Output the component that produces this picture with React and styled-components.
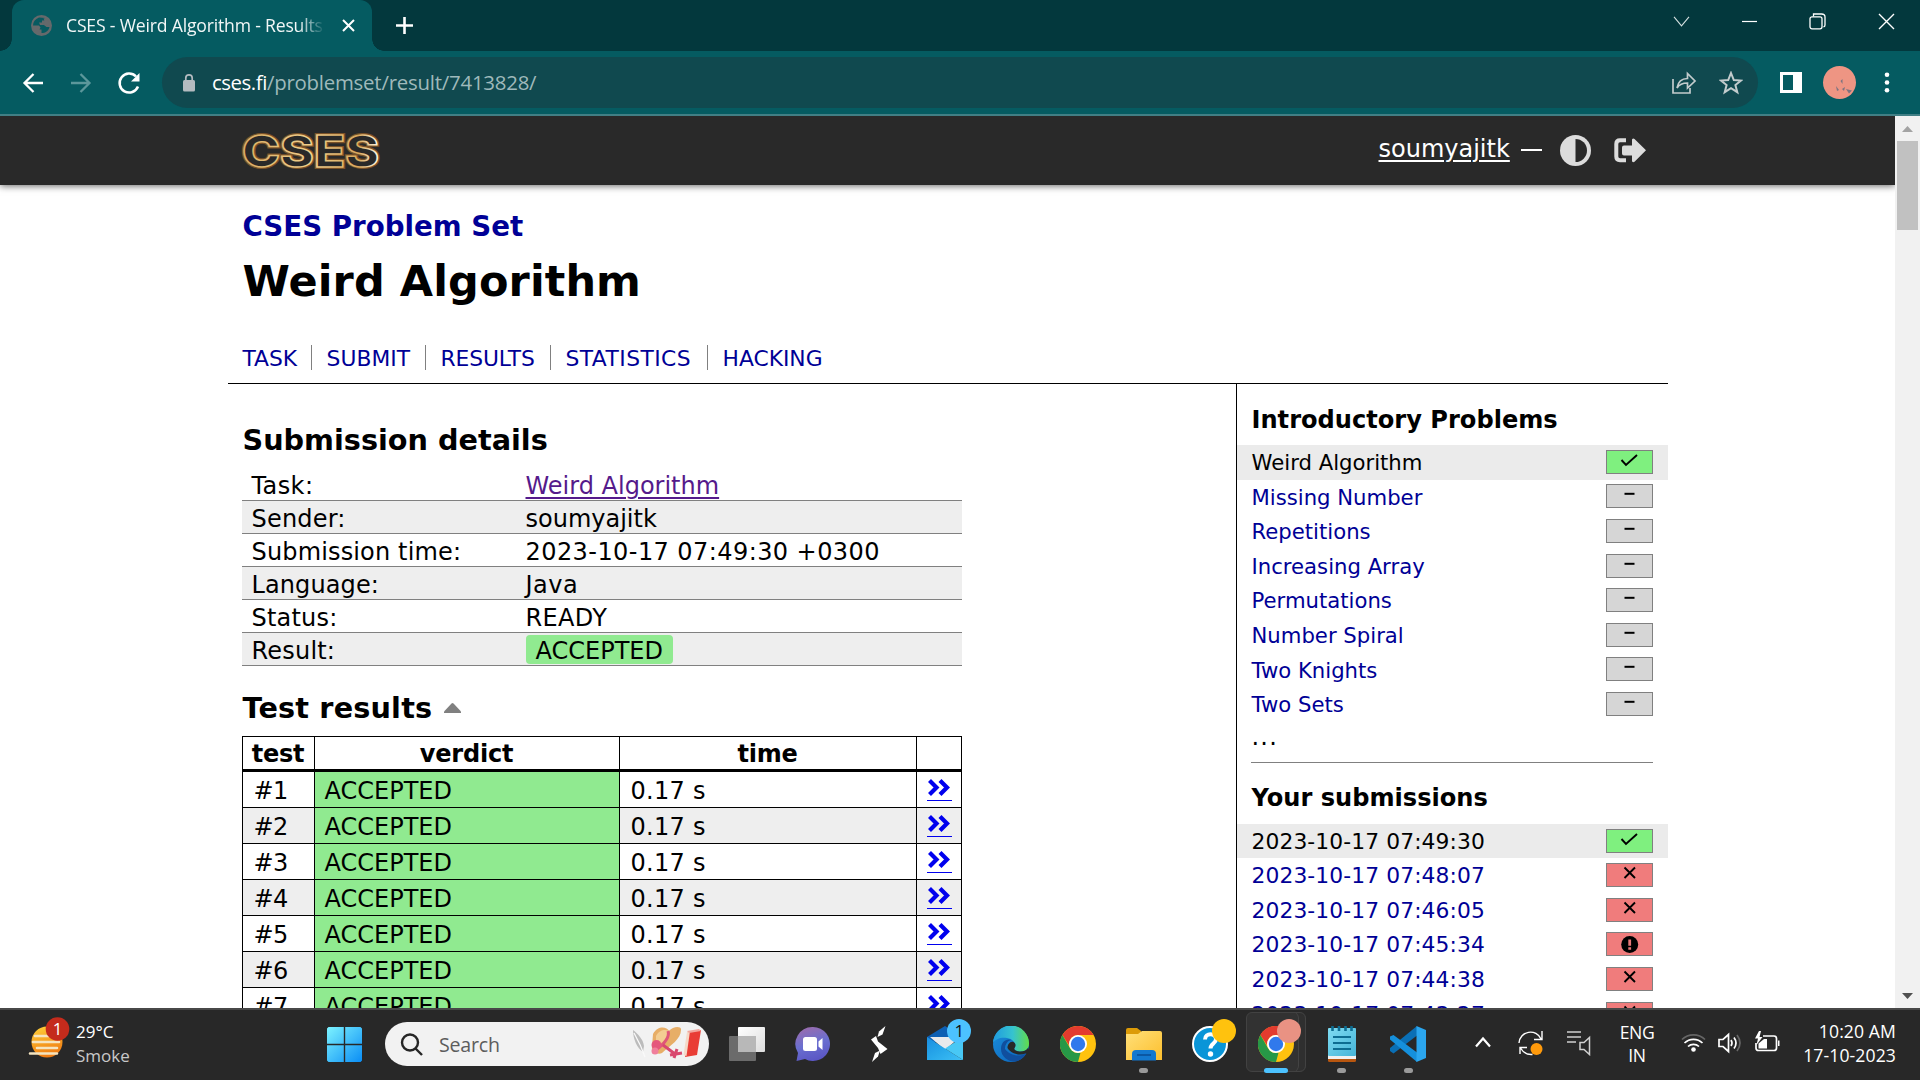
import React from 'react';
import styled, { createGlobalStyle } from 'styled-components';

const Global = createGlobalStyle`
  * { box-sizing: border-box; }
  body { margin: 0; background: #fff; overflow: hidden; }
  svg { display: block; flex: none; }
`;

const ui = '"Open Sans", "Noto Sans", sans-serif';
const page = '"DejaVu Sans", Verdana, sans-serif';

const Screen = styled.div`
  width: 1920px;
  height: 1080px;
  display: flex;
  flex-direction: column;
  overflow: hidden;
  font-family: ${page};
  color: #000;
`;
const Text = styled.span`
  letter-spacing: ${(p) => p.$ls || 0}px;
`;

/* ---------- browser chrome ---------- */
const TabStrip = styled.div`
  height: 51px;
  flex: none;
  display: flex;
  align-items: center;
  padding-left: 12px;
  background: #03383d;
`;
const Tab = styled.div`
  position: relative;
  width: 360px;
  height: 51px;
  display: flex;
  align-items: center;
  padding-left: 19px;
  background: #055b61;
  border-radius: 12px 12px 0 0;
  &::before, &::after {
    content: '';
    position: absolute;
    bottom: 0;
    width: 12px;
    height: 12px;
  }
  &::before { left: -12px; background: radial-gradient(circle at 0 0, transparent 11.5px, #055b61 12px); }
  &::after { right: -12px; background: radial-gradient(circle at 100% 0, transparent 11.5px, #055b61 12px); }
`;
const TabTitle = styled.div`
  width: 258px;
  margin: -1px 18px 0 14px;
  overflow: hidden;
  white-space: nowrap;
  font: 17.6px/26px ${ui};
  letter-spacing: -0.18px;
  color: #f2f7f7;
  mask-image: linear-gradient(90deg, #000 232px, transparent 259px);
`;
const NewTab = styled.div`
  margin-left: 23px;
  flex: 1;
`;
const WindowButtons = styled.div`
  display: flex;
  align-items: center;
  height: 43px;
  align-self: flex-start;
  gap: 50px;
  padding-right: 25px;
`;
const Toolbar = styled.div`
  height: 65px;
  flex: none;
  display: flex;
  align-items: center;
  padding: 0 21px 0 21px;
  background: #055b61;
  border-bottom: 2px solid #417f85;
`;
const NavButtons = styled.div`
  display: flex;
  gap: 24px;
  width: 141px;
`;
const AddressBar = styled.div`
  width: 1596px;
  height: 51px;
  display: flex;
  align-items: center;
  padding: 0 15px 0 20px;
  border-radius: 26px;
  background: #10494f;
`;
const Url = styled.div`
  flex: 1;
  margin: -2px 0 0 16px;
  font: 20.4px/30px ${ui};
  letter-spacing: -0.22px;
  color: #9fb9bb;
  b { font-weight: 400; color: #fff; letter-spacing: -0.45px; }
`;
const AddressActions = styled.div`
  display: flex;
  gap: 22px;
`;
const Extensions = styled.div`
  display: flex;
  align-items: center;
  margin-left: 21px;
`;
const Avatar = styled.div`
  width: 33px;
  height: 33px;
  margin: 0 28px 0 21px;
  border-radius: 50%;
  background: #ee9583;
`;

/* ---------- page ---------- */
const Viewport = styled.div`
  height: 892px;
  flex: none;
  display: flex;
  background: #fff;
  overflow: hidden;
`;
const Page = styled.div`
  width: 1895px;
  height: 892px;
  overflow: hidden;
`;
const Header = styled.header`
  height: 69px;
  display: flex;
  justify-content: center;
  background: #292929;
  box-shadow: 0 1px 7px rgba(0, 0, 0, 0.6);
`;
const HeaderInner = styled.div`
  width: 1440px;
  display: flex;
  align-items: center;
  justify-content: space-between;
  padding: 0 22px 0 14px;
`;
const Controls = styled.div`
  display: flex;
  align-items: center;
  font-size: 24px;
  line-height: 30px;
  color: #fff;
`;
const UserLink = styled.a`
  width: 132px;
  margin-top: -4px;
  text-decoration: underline;
  text-decoration-thickness: 2px;
  text-underline-offset: 3px;
`;
const Dash = styled.span`
  width: 21px;
  height: 2px;
  margin: -2px 18px 0 10px;
  background: #fff;
`;
const Content = styled.div`
  width: 1440px;
  margin: 0 auto;
`;
const TitleBlock = styled.div`
  height: 199px;
  padding: 24px 14px 0 15px;
  border-bottom: 1px solid #000;
`;
const SetName = styled.h3`
  margin: 0;
  font-size: 27.7px;
  line-height: 36px;
  color: #000096;
`;
const Title = styled.h1`
  margin: 10px 0 38px;
  font-size: 43px;
  letter-spacing: 0.1px;
  line-height: 52px;
`;
const Nav = styled.ul`
  display: flex;
  margin: 0;
  padding: 0;
  list-style: none;
`;
const NavItem = styled.li`
  height: 25px;
  width: ${(p) => p.$w}px;
  line-height: 27px;
  font-size: 21.8px;
  letter-spacing: ${(p) => p.$ls}px;
  white-space: nowrap;
  color: #000096;
  border-right: ${(p) => (p.$last ? 0 : 1)}px solid #808080;
  & + & { padding-left: 15px; }
`;
const Columns = styled.div`
  display: flex;
`;
const Main = styled.main`
  width: 1008px;
  padding: 38px 0 0 14px;
`;
const Heading = styled.h2`
  display: flex;
  align-items: center;
  gap: 12px;
  margin: ${(p) => p.$mt || 0}px 0 0;
  padding-left: 1px;
  font-size: 28.7px;
  line-height: 36px;
  letter-spacing: ${(p) => p.$ls || 0}px;
`;
const Details = styled.div`
  width: 720px;
  margin-top: 10px;
  font-size: 24px;
`;
const DetailRow = styled.div`
  height: 33px;
  display: grid;
  grid-template-columns: 274px 1fr;
  grid-template-rows: 32px;
  padding-left: 10px;
  line-height: 37px;
  white-space: nowrap;
  border-bottom: 1px solid #808080;
  background: ${(p) => (p.$odd ? '#eee' : '#fff')};
`;
const VisitedLink = styled.a`
  color: #551a8b;
  text-decoration: underline;
  text-decoration-thickness: 2px;
  text-underline-offset: 3px;
`;
const Accepted = styled.div`
  width: 147px;
  height: 29px;
  margin-top: 2px;
  padding-left: 10px;
  line-height: 33px;
  border-radius: 4px;
  background: #90ea90;
`;
const Table = styled.div`
  width: 720px;
  margin-top: 10px;
  border: solid #000;
  border-width: 1px 0 0 1px;
  font-size: 24px;
`;
const TableRow = styled.div`
  height: ${(p) => (p.$head ? 35 : 36)}px;
  display: grid;
  grid-template-columns: 72px 305px 297px 45px;
  grid-template-rows: ${(p) => (p.$head ? 32 : 35)}px;
  border-bottom: ${(p) => (p.$head ? 3 : 1)}px solid #000;
  background: ${(p) => (p.$odd ? '#eee' : '#fff')};
`;
const Th = styled.div`
  border-right: 1px solid #000;
  text-align: center;
  font-weight: 700;
  line-height: 34px;
  letter-spacing: -0.2px;
`;
const Td = styled.div`
  border-right: 1px solid #000;
  padding-left: ${(p) => p.$pad || 10}px;
  line-height: 38px;
  background: ${(p) => (p.$ok ? '#90ea90' : 'transparent')};
`;
const MoreLink = styled.a`
  display: block;
  width: 25px;
  height: 29px;
  padding-top: 6px;
  border-bottom: 1px solid #0000ee;
`;
const Sidebar = styled.aside`
  width: 432px;
  height: 640px;
  padding-top: 21px;
  border-left: 1px solid #000;
`;
const SideTitle = styled.h4`
  margin: 0 0 ${(p) => p.$mb || 10}px 15px;
  font-size: 24.1px;
  line-height: 30px;
`;
const SideRow = styled.div`
  height: 34.6px;
  display: flex;
  justify-content: space-between;
  padding: 0 15px 0 15px;
  font-size: ${(p) => (p.$date ? 21.8 : 21.2)}px;
  letter-spacing: ${(p) => (p.$date ? 0.1 : 0)}px;
  line-height: ${(p) => (p.$date ? 36.6 : 35.8)}px;
  color: ${(p) => (p.$current ? '#000' : '#000096')};
  background: ${(p) => (p.$current ? '#ebebeb' : 'transparent')};
`;
const tones = { ok: '#7ff07f', none: '#d6d6d6', bad: '#f07c7c' };
const Badge = styled.div`
  width: 47px;
  height: 24px;
  margin-top: ${(p) => p.$mt}px;
  border: 1px solid #808080;
  background: ${(p) => tones[p.$tone]};
`;
const Ellipsis = styled.div`
  height: 31px;
  padding-left: 15px;
  line-height: 31px;
  font-size: 24px;
  letter-spacing: 1.2px;
`;
const Rule = styled.div`
  height: 1px;
  margin: 9px 15px 20px 14px;
  background: #808080;
`;
const Scrollbar = styled.div`
  width: 25px;
  height: 892px;
  display: flex;
  flex-direction: column;
  align-items: center;
  background: #f1f1f1;
`;
const Thumb = styled.div`
  width: 21px;
  height: 89px;
  margin-bottom: auto;
  background: #c1c1c1;
`;

/* ---------- taskbar ---------- */
const Taskbar = styled.div`
  height: 72px;
  flex: none;
  display: flex;
  align-items: stretch;
  border-top: 2px solid #484848;
  background: #282828;
  font-family: ${ui};
  color: #fff;
`;
const Weather = styled.div`
  width: 313px;
  display: flex;
  padding: 12px 0 0 28px;
`;
const WeatherIcon = styled.div`
  margin-top: -5px;
`;
const WeatherText = styled.div`
  margin: -2px 0 0 6px;
  font-size: 17px;
  line-height: 24px;
  div + div { color: #c8c8c8; }
`;
const StartButton = styled.div`
  width: 73px;
  padding: 17px 0 0 15px;
`;
const SearchBox = styled.div`
  width: 325px;
  height: 44px;
  margin-top: 12px;
  display: flex;
  align-items: center;
  padding: 0 6px 0 15px;
  border-radius: 22px;
  background: #f2f2f2;
  color: #5d5d5d;
  font-size: 19.6px;
`;
const SearchLabel = styled.div`
  flex: 1;
  margin-left: 16px;
  letter-spacing: -0.2px;
`;
const Apps = styled.div`
  display: flex;
  margin-left: 5px;
  width: 727px;
`;
const AppButton = styled.div`
  position: relative;
  width: 66.1px;
  height: 70px;
  display: flex;
  flex-direction: column;
  align-items: center;
  padding-top: 16px;
`;
const ActiveFrame = styled.div`
  position: absolute;
  left: 3px;
  top: 2px;
  width: 60px;
  height: 60px;
  border: 1px solid #424242;
  border-radius: 6px;
  background: #323232;
  box-shadow: inset -7px 0 0 -1px #2f2f2f, inset -8px 0 0 -1px #434343;
`;
const Icon = styled.div`
  position: relative;
  width: 36px;
  height: 36px;
`;
const Notice = styled.div`
  position: absolute;
  left: ${(p) => p.$x}px;
  top: -7px;
  width: 24px;
  height: 24px;
  border-radius: 50%;
  background: ${(p) => p.$bg};
  color: #111;
  font-size: 17px;
  line-height: 24px;
  text-align: center;
`;
const Indicator = styled.div`
  position: relative;
  width: ${(p) => (p.$active ? 24 : 9)}px;
  height: 5px;
  margin-top: 6px;
  border-radius: 3px;
  background: ${(p) => (p.$active ? '#4cc2ff' : '#9a9a9a')};
`;
const Tray = styled.div`
  flex: 1;
  display: flex;
  padding: 18px 24px 0 34px;
`;
const Slot = styled.div`
  width: ${(p) => p.$w}px;
`;
const Lines = styled.div`
  width: ${(p) => p.$w}px;
  margin-top: ${(p) => p.$mt}px;
  font-size: 17.6px;
  line-height: ${(p) => p.$lh}px;
  text-align: ${(p) => p.$align};
  letter-spacing: ${(p) => p.$ls}px;
  white-space: nowrap;
`;

const Stroke = ({ w, h, d, c = '#fff', s = 1.5, f = 'none', children, ...r }) => (
  <svg width={w} height={h} viewBox={`0 0 ${w} ${h}`} fill={f} stroke={c} strokeWidth={s} {...r}>
    {d && <path d={d} />}
    {children}
  </svg>
);

const Globe = () => (
  <svg width="21" height="21" viewBox="0 0 21 21">
    <circle cx="10.5" cy="10.5" r="10.5" fill="#65696b" />
    <path d="M8 2.500C4 4 2 7 2 10.500h6l1.500 2-1 2h2v3.500c4 0 7-2 8-6h-3l-2.500-2h-4l-1-2.500h3V5.500h3V3z" fill="#075a60" />
    <path d="M12.500 2.500l5 3.500 1.500 4-3 1.500-3.500-2 1-3z" fill="#65696b" />
  </svg>
);

const Logo = () => (
  <svg width="138" height="40" viewBox="0 0 138 40" overflow="visible">
    <defs>
      <linearGradient id="gold" x1="0" x2="1">
        <stop offset="0" stopColor="#d9ad62" />
        <stop offset=".5" stopColor="#f0cf8c" />
        <stop offset=".85" stopColor="#d9a95c" />
        <stop offset="1" stopColor="#fff6e6" />
      </linearGradient>
    </defs>
    {[['#7a5228', 4], ['url(#gold)', 1.5]].map(([c, w]) => (
      <text key={w} x="0" y="36" fontFamily="Inter, sans-serif" fontWeight="800" fontSize="44" textLength="137"
        lengthAdjust="spacingAndGlyphs" fill="#292929" stroke={c} strokeWidth={w}>CSES</text>
    ))}
  </svg>
);

const Mark = ({ kind }) => (
  <svg width="45" height="22" viewBox="0 0 45 22" fill="none" stroke="#000" strokeWidth="1.9">
    {kind === 'ok' && <path d="M14.500 9l4.500 5L30 4" />}
    {kind === 'none' && <path d="M17.500 8.800h10" strokeWidth="2" />}
    {kind === 'x' && <path d="M17.500 3.500l10.500 10.500M28 3.500L17.500 14" />}
    {kind === '!' && (
      <>
        <circle cx="22.700" cy="11.500" r="8.500" fill="#000" stroke="none" />
        <path d="M22.700 6.500v6.200M22.700 14.200v2.600" stroke="#e87878" strokeWidth="2.800" />
      </>
    )}
  </svg>
);

const Chrome = () => (
  <svg width="36" height="36" viewBox="0 0 36 36">
    <circle cx="18" cy="18" r="18" fill="#ffc20e" />
    <path d="M2.400 9A18 18 0 0 1 33.600 9H18a9 9 0 0 0-7.800 4.500l-1 6z" fill="#e33b2e" />
    <path d="M2.400 9l7.800 13.500A9 9 0 0 0 20.500 26.700L18 36A18 18 0 0 1 2.400 9z" fill="#279847" />
    <circle cx="18" cy="18" r="9" fill="#fff" />
    <circle cx="18" cy="18" r="7.200" fill="#3079ec" />
  </svg>
);

const icons = {
  taskview: (
    <svg width="36" height="36" viewBox="0 0 36 36">
      <defs><linearGradient id="tv" x2="1" y2="1"><stop stopColor="#fff" /><stop offset="1" stopColor="#ddd" /></linearGradient></defs>
      <rect x="9" y="1" width="27" height="25" rx="1" fill="url(#tv)" />
      <rect x="0" y="10" width="27" height="25" rx="1" fill="#6b6b6b" />
      <path d="M9 10h18v16H9z" fill="#b8b8b8" />
    </svg>
  ),
  chat: (
    <svg width="36" height="36" viewBox="0 0 36 36">
      <defs><linearGradient id="ch" x1=".3" x2=".6" y2="1"><stop stopColor="#9a6cae" /><stop offset=".5" stopColor="#6a6fd0" /><stop offset="1" stopColor="#5a55c4" /></linearGradient></defs>
      <path d="M18 1a17 17 0 1 1-8 32l-8.500 2 1.500-8A17 17 0 0 1 18 1z" fill="url(#ch)" />
      <rect x="8" y="11" width="14" height="14" rx="2.500" fill="#fff" />
      <path d="M23.500 15.500l4-3.500v12l-4-3.500z" fill="#fff" />
    </svg>
  ),
  bolt: (
    <svg width="36" height="36" viewBox="0 0 36 36" fill="#fff">
      <path d="M24.500 0l-6.500 5.500-1.500 5.500 5-2.500z" />
      <path d="M10 13.500l5-3.500 2 5.500 9.500 7.500-7 5-2.500-6z" />
      <path d="M11 36l6-5.500 2-6-5 2.500z" />
    </svg>
  ),
  mail: (
    <svg width="36" height="36" viewBox="0 0 36 36">
      <defs><linearGradient id="ml" x2="1" y2="1"><stop stopColor="#1a8de0" /><stop offset=".5" stopColor="#28a8ea" /><stop offset="1" stopColor="#3fc0f5" /></linearGradient></defs>
      <path d="M0 11L18 0l18 11v5H0z" fill="#0d5fb3" />
      <path d="M3 11h30L18 24z" fill="#e9eaec" />
      <path d="M0 11l36 23H0z" fill="url(#ml)" />
      <path d="M36 11L18 22.500 36 34z" fill="#48c8f5" />
    </svg>
  ),
  edge: (
    <svg width="36" height="36" viewBox="0 0 36 36">
      <defs>
        <linearGradient id="e1" x2="1"><stop stopColor="#1f9be0" /><stop offset=".55" stopColor="#36c3cf" /><stop offset="1" stopColor="#62dc4a" /></linearGradient>
        <linearGradient id="e2" x1="0" x2="1" y2="1"><stop stopColor="#1b8fdc" /><stop offset="1" stopColor="#0b62b8" /></linearGradient>
      </defs>
      <circle cx="18" cy="18" r="18" fill="url(#e2)" />
      <path d="M12 23c0-5 3-9 7-9-6-2-11 2-11 9 0 8 8 13 14 12.500 5-.6 9-4 11-8-7 4-16 2-21-4.500z" fill="#104f9e" />
      <path d="M0 17A18 18 0 0 1 36 18c0 5-4 7.500-8.500 7.500-4 0-7-1.500-6-3.500C24 19 21 13 14 12 8 11 2 13 0 17z" fill="url(#e1)" />
      <path d="M21.500 22c-1.200 2 2 3.500 6 3.500 3 0 6-1 7.500-3.500l1 6-3.500-.5c-6 2.500-15 0-18-5.500 0-4 3-7.500 6-6 2.500 1.500 2.500 4 1 6z" fill="#282828" />
    </svg>
  ),
  chrome: <Chrome />,
  folder: (
    <svg width="36" height="36" viewBox="0 0 36 36">
      <defs><linearGradient id="fo" x2="1" y2="1"><stop stopColor="#ffe07a" /><stop offset="1" stopColor="#fdbf2d" /></linearGradient></defs>
      <path d="M0 4q0-2 2-2h9l4 3v5H0z" fill="#dc9b08" />
      <path d="M0 8h12l4-3h18q2 0 2 2v27H0z" fill="url(#fo)" />
      <path d="M6 34.500V28q0-4 4-4h16q4 0 4 4v6.500z" fill="#1378cf" />
      <path d="M11 29h14" stroke="#0a4d94" strokeWidth="1.500" />
    </svg>
  ),
  help: (
    <svg width="36" height="36" viewBox="0 0 36 36">
      <circle cx="18" cy="18" r="17" fill="#0995d8" stroke="#fff" strokeWidth="2" />
      <path d="M13 13.500c0-7 11-7 11-.5 0 4.500-5.500 4.500-5.500 9.500" fill="none" stroke="#fff" strokeWidth="4" />
      <circle cx="18.500" cy="28" r="2.700" fill="#fff" />
    </svg>
  ),
  notepad: (
    <svg width="36" height="36" viewBox="0 0 36 36">
      <defs><linearGradient id="np" x2="1" y2="1"><stop stopColor="#7fdcf2" /><stop offset="1" stopColor="#45b4d8" /></linearGradient></defs>
      <rect x="4" y="30" width="28" height="6" rx="1.500" fill="#b8560f" />
      <rect x="4" y="28" width="28" height="5" fill="#f0f0f0" />
      <rect x="4" y="2" width="28" height="28" rx="1" fill="url(#np)" />
      <path d="M9 11h18M9 17h18M9 23h18" stroke="#0d6d92" strokeWidth="1.800" />
      <path d="M8.500 0v5M15 0v5M21.500 0v5M27.500 0v5" stroke="#0d6d92" strokeWidth="2.600" />
    </svg>
  ),
  code: (
    <svg width="36" height="36" viewBox="0 0 36 36">
      <path d="M27 0L0 22v3l3.500 2.500L27 9.500z" fill="#0a6fb5" />
      <path d="M0 13.500v-3L3.500 9 27 26.500V36z" fill="#1590dc" />
      <path d="M26.500 0L36 4v28l-9.500 4z" fill="#2ba6ee" />
    </svg>
  ),
};

const apps = [
  { icon: 'taskview' },
  { icon: 'chat' },
  { icon: 'bolt' },
  { icon: 'mail', notice: '#4cc2ff', x: 20, count: '1' },
  { icon: 'edge' },
  { icon: 'chrome' },
  { icon: 'folder', open: true },
  { icon: 'help', notice: '#ffc20e', x: 20 },
  { icon: 'chrome', notice: '#e99283', x: 19, active: true, open: true },
  { icon: 'notepad', open: true },
  { icon: 'code', open: true },
];

const nav = [
  ['TASK', 69, 0], ['SUBMIT', 114, 0.05], ['RESULTS', 125, -0.1], ['STATISTICS', 157, 0.45], ['HACKING', 120, 0],
];
const details = [
  ['Task:', <VisitedLink>Weird Algorithm</VisitedLink>, 0.4],
  ['Sender:', 'soumyajitk', 0.2],
  ['Submission time:', <Text $ls={0.43}>2023-10-17 07:49:30 +0300</Text>, 0.15],
  ['Language:', <Text $ls={0.5}>Java</Text>, 0.1],
  ['Status:', <Text $ls={0.3}>READY</Text>, 0.2],
  ['Result:', <Accepted>ACCEPTED</Accepted>, 0.2],
];
const problems = ['Weird Algorithm', 'Missing Number', 'Repetitions', 'Increasing Array', 'Permutations', 'Number Spiral', 'Two Knights', 'Two Sets'];
const submissions = [
  ['07:49:30', 'ok'], ['07:48:07', 'x'], ['07:46:05', 'x'], ['07:45:34', '!'], ['07:44:38', 'x'], ['07:43:27', 'x'],
];

export default function App() {
  return (
    <Screen>
      <Global />
      <TabStrip>
        <Tab>
          <Globe />
          <TabTitle>CSES - Weird Algorithm - Results</TabTitle>
          <Stroke w={13} h={13} s={2} d="M1 1l11 11M12 1L1 12" />
        </Tab>
        <NewTab><Stroke w={19} h={19} s={2.6} d="M9.500 1v17M1 9.500h17" /></NewTab>
        <WindowButtons>
          <Stroke w={17} h={11} s={1.1} c="#d5e0e0" d="M1 .8l7.500 9L16 .8" />
          <Stroke w={19} h={16} s={1.2} d="M2 7.500h15" />
          <Stroke w={17} h={17} s={1.3} d="M4.500 3.500V1h8q3.500 0 3.500 3v8q0 1.500-1.500 2">
            <rect x="1" y="3.800" width="12" height="12" rx="2" />
          </Stroke>
          <Stroke w={19} h={17} s={1.4} d="M3 1l15 15M18 1L3 16" />
        </WindowButtons>
      </TabStrip>
      <Toolbar>
        <NavButtons>
          <Stroke w={24} h={24} s={2.3} d="M22 12H4M12.500 3L3.500 12l9 9" />
          <Stroke w={24} h={24} s={2.3} c="#5c979b" d="M2 12h18M11.500 3l9 9-9 9" />
          <Stroke w={24} h={24} s={2.5} d="M21 15.500A9.500 9.500 0 1 1 19 5.500">
            <path d="M22.500 2v8.500H14z" fill="#fff" stroke="none" />
          </Stroke>
        </NavButtons>
        <AddressBar>
          <svg width="14" height="20" viewBox="0 0 14 20">
            <rect x="1" y="7" width="12" height="11.500" rx="1.500" fill="#b4bbc0" />
            <path d="M3.800 8V5a3.200 3.200 0 0 1 6.400 0V8" fill="none" stroke="#b4bbc0" strokeWidth="1.700" />
          </svg>
          <Url><b>cses.fi</b>/problemset/result/7413828/</Url>
          <AddressActions>
            <Stroke w={26} h={24} s={1.7} c="#c3cccd" d="M2 8v14h17v-5M6 17c1-6 4-9.500 10.500-9.500V2.500L24 10l-7.500 7v-5C12 12 8.500 13 6 17z" />
            <Stroke w={24} h={24} s={2} c="#c3cccd" d="M12 2l2.800 7 7.200.5-5.600 4.600 1.900 7.100L12 17.200l-6.300 4 1.900-7.100L2 9.500l7.200-.5z" />
          </AddressActions>
        </AddressBar>
        <Extensions>
          <svg width="23" height="21" viewBox="0 0 23 21">
            <path fillRule="evenodd" fill="#fff" d="M1 0h22v21H1zM4 3v15h10V3z" />
          </svg>
          <Avatar>
            <svg width="33" height="33" viewBox="0 0 33 33" fill="#7d7480">
              <path d="M17.500 15l2-2v5zM13 20l3 4-2 1zM19 23l3-2-1 4zM23 23l6 1.500-3 3z" />
            </svg>
          </Avatar>
          <svg width="6" height="21" viewBox="0 0 6 21" fill="#fff">
            <circle cx="3" cy="2.800" r="2.300" /><circle cx="3" cy="10.500" r="2.300" /><circle cx="3" cy="18.200" r="2.300" />
          </svg>
        </Extensions>
      </Toolbar>

      <Viewport>
        <Page>
          <Header>
            <HeaderInner>
              <Logo />
              <Controls>
                <UserLink>soumyajitk</UserLink>
                <Dash />
                <svg width="31" height="31" viewBox="0 0 31 31">
                  <circle cx="15.500" cy="15.500" r="15.500" fill="#dcdcdc" />
                  <path d="M15.500 4a11.500 11.500 0 0 1 0 23z" fill="#292929" />
                </svg>
                <svg width="55" height="25" viewBox="-23 0 55 25">
                  <path d="M12 2.300H6q-3.700 0-3.700 3.700v12.500q0 3.700 3.700 3.700h6" fill="none" stroke="#dcdcdc" strokeWidth="4" />
                  <path d="M10 7.500h8V1.500q1-1.500 2.500-.5L32 12.300 20.500 23.800q-1.500 1-2.500-.5V17.500h-8q-2 0-2-2v-6q0-2 2-2z" fill="#dcdcdc" />
                </svg>
              </Controls>
            </HeaderInner>
          </Header>
          <Content>
            <TitleBlock>
              <SetName>CSES Problem Set</SetName>
              <Title>Weird Algorithm</Title>
              <Nav>
                {nav.map(([t, w, ls], i) => <NavItem key={t} $w={w} $ls={ls} $last={i === 4}>{t}</NavItem>)}
              </Nav>
            </TitleBlock>
            <Columns>
              <Main>
                <Heading>Submission details</Heading>
                <Details>
                  {details.map(([k, v, ls], i) => (
                    <DetailRow key={k} $odd={i % 2 === 1}><Text $ls={ls}>{k}</Text><div>{v}</div></DetailRow>
                  ))}
                </Details>
                <Heading $mt={24} $ls={0.17}>
                  Test results
                  <svg width="17" height="10" viewBox="0 0 17 10"><path d="M0 8.500L7.500.5q1-1 2 0L17 8.500V10H0z" fill="#808080" /></svg>
                </Heading>
                <Table>
                  <TableRow $head><Th>test</Th><Th>verdict</Th><Th>time</Th><Th /></TableRow>
                  {[1, 2, 3, 4, 5, 6, 7].map((n) => (
                    <TableRow key={n} $odd={n % 2 === 0}>
                      <Td $pad={11}><Text $ls={-0.5}>#{n}</Text></Td>
                      <Td $ok>ACCEPTED</Td>
                      <Td $pad={11}><Text $ls={0.3}>0.17 s</Text></Td>
                      <Td>
                        <MoreLink>
                          <Stroke w={25} h={20} s={4.2} c="#0000ee" d="M2.500 2.500l7 7-7 7M13 2.500l7 7-7 7" />
                        </MoreLink>
                      </Td>
                    </TableRow>
                  ))}
                </Table>
              </Main>
              <Sidebar>
                <SideTitle>Introductory Problems</SideTitle>
                {problems.map((p, i) => (
                  <SideRow key={p} $current={i === 0}>
                    <span>{p}</span>
                    <Badge $mt={4.8} $tone={i ? 'none' : 'ok'}><Mark kind={i ? 'none' : 'ok'} /></Badge>
                  </SideRow>
                ))}
                <Ellipsis>...</Ellipsis>
                <Rule />
                <SideTitle $mb={10.8}>Your submissions</SideTitle>
                {submissions.map(([t, k], i) => (
                  <SideRow key={t} $date $current={i === 0}>
                    <span>2023-10-17 {t}</span>
                    <Badge $mt={5} $tone={i ? 'bad' : 'ok'}><Mark kind={k} /></Badge>
                  </SideRow>
                ))}
              </Sidebar>
            </Columns>
          </Content>
        </Page>
        <Scrollbar>
          <svg width="25" height="25" viewBox="0 0 25 25"><path d="M7 16l5.500-6L18 16z" fill="#a3a3a3" /></svg>
          <Thumb />
          <svg width="25" height="25" viewBox="0 0 25 25"><path d="M7 10l5.500 6L18 10z" fill="#505050" /></svg>
        </Scrollbar>
      </Viewport>

      <Taskbar>
        <Weather>
          <WeatherIcon>
            <svg width="42" height="50" viewBox="0 0 42 50">
              <defs><linearGradient id="sun" y2="1" x2=".3"><stop stopColor="#ffd23a" /><stop offset="1" stopColor="#f07c12" /></linearGradient></defs>
              <circle cx="19" cy="25" r="15.500" fill="url(#sun)" />
              <path d="M7 19h14M5 25h26M9 31h20M2 36.500h27" stroke="#f5e4bf" strokeWidth="2.600" strokeLinecap="round" />
              <circle cx="29.500" cy="12" r="11.800" fill="#c42b1c" />
              <text x="29.500" y="18" fontSize="17" fill="#fff" textAnchor="middle">1</text>
            </svg>
          </WeatherIcon>
          <WeatherText><div>29°C</div><div>Smoke</div></WeatherText>
        </Weather>
        <StartButton>
          <svg width="35" height="35" viewBox="0 0 35 35">
            <defs><linearGradient id="win" x2="1" y2="1"><stop stopColor="#7df3ff" /><stop offset="1" stopColor="#0a8df5" /></linearGradient></defs>
            <path d="M1.500 0H16.800V16.800H0V1.500zM18.200 0H33.500L35 1.500V16.800H18.200zM0 18.200H16.800V35H1.500L0 33.500zM18.200 18.200H35V33.500L33.500 35H18.200z" fill="url(#win)" />
          </svg>
        </StartButton>
        <SearchBox>
          <Stroke w={23} h={23} c="#262626" s={2.4} d="M15.500 15.500l6.500 6.500"><circle cx="10" cy="9.500" r="8" /></Stroke>
          <SearchLabel>Search</SearchLabel>
          <svg width="72" height="34" viewBox="0 0 72 34">
            <path d="M2 3c5 4 10 9 11 16l-1 6C6 21 2 12 2 3z" fill="#bcbcbc" />
            <path d="M3 6c4 7 7 12 11 24" stroke="#fafafa" strokeWidth="1.300" fill="none" />
            <path d="M22 7C27-2 36 0 38 4c4-5 13-5 12-1 0 9-10 15-19 23-4 2-11-1-10-6z" fill="#e7ae67" />
            <path d="M25 9c3-6 9-7 13-5-1 6-6 12-13 15z" fill="#f3cd92" />
            <path d="M37 4c2 6-4 13-12 19" stroke="#e05579" strokeWidth="3" fill="none" />
            <circle cx="25.500" cy="18" r="5" fill="#e5577d" /><circle cx="24" cy="24" r="3.500" fill="#f07f9c" />
            <path d="M32 18l12 9M46 22l-3 9M39 28l12-2" stroke="#d9486f" strokeWidth="3" />
            <path d="M58 5l12-2-4 25-12 2z" fill="#e93d35" />
            <path d="M56 5l3-1-3.500 25-3-1z" fill="#f5d9c8" /><path d="M56 4l12-2 2 2-12 2z" fill="#f2a69c" />
          </svg>
        </SearchBox>
        <Apps>
          {apps.map((a, i) => (
            <AppButton key={i}>
              {a.active && <ActiveFrame />}
              <Icon>
                {icons[a.icon]}
                {a.notice && <Notice $bg={a.notice} $x={a.x}>{a.count}</Notice>}
              </Icon>
              {a.open && <Indicator $active={a.active} />}
            </AppButton>
          ))}
        </Apps>
        <Tray>
          <Slot $w={43}><Stroke w={16} h={28} s={2.2} d="M1 18.500l7-8 7 8" /></Slot>
          <Slot $w={49}>
            <Stroke w={26} h={30} s={1.4} d="M1 15a11.500 11.500 0 0 1 22-4M24 3v8.500h-8M2 26v-6.500h7M2.500 20c3 5 7 7 12 6.500">
              <circle cx="18.500" cy="21" r="6" fill="#ff9a0c" stroke="none" />
            </Stroke>
          </Slot>
          <Slot $w={52}><Stroke w={25} h={28} s={1.5} c="#d0d0d0" d="M0 4h14M0 9h14M0 14h9M13 14.500h4l5.500-5v17l-5.500-5h-4z" /></Slot>
          <Lines $w={36} $align="center" $mt={-7} $lh={23} $ls={-0.4}>ENG<br />IN</Lines>
          <Slot $w={26} />
          <Slot $w={37}>
            <svg width="25" height="28" viewBox="0 0 25 28" fill="none" stroke="#fff" strokeWidth="1.700">
              <path d="M1 11.500a16.500 16.500 0 0 1 23 0" stroke="#666" />
              <path d="M3.500 15a13 13 0 0 1 18 0M7 18.500a8 8 0 0 1 11 0" />
              <circle cx="12.500" cy="21.500" r="2.300" fill="#fff" stroke="none" />
            </svg>
          </Slot>
          <Slot $w={36}>
            <Stroke w={25} h={28} s={1.700} d="M1 11.500h4l5.500-5v17l-5.500-5H1zM13 12q2 3 0 6M16 9.500q4 5.500 0 11">
              <path d="M19 7q6 8 0 16" stroke="#666" />
            </Stroke>
          </Slot>
          <Slot $w={35}>
            <svg width="26" height="28" viewBox="0 0 26 28">
              <path d="M9 8h11q2.500 0 2.500 2.500V20q0 2.500-2.500 2.500H4.500Q2 22.500 2 20v-5" fill="none" stroke="#fff" strokeWidth="1.700" />
              <path d="M24 12.500h1.500v5.500H24zM4.500 15.500L10 11h3v9.500H4.500z" fill="#fff" />
              <path d="M5 3L1 10.500h3L2.500 17 8.500 9H5.500L7 3z" fill="#fff" />
            </svg>
          </Slot>
          <Lines $w={107} $align="right" $mt={-9} $lh={24} $ls={0.1}>10:20 AM<br />17-10-2023</Lines>
        </Tray>
      </Taskbar>
    </Screen>
  );
}
